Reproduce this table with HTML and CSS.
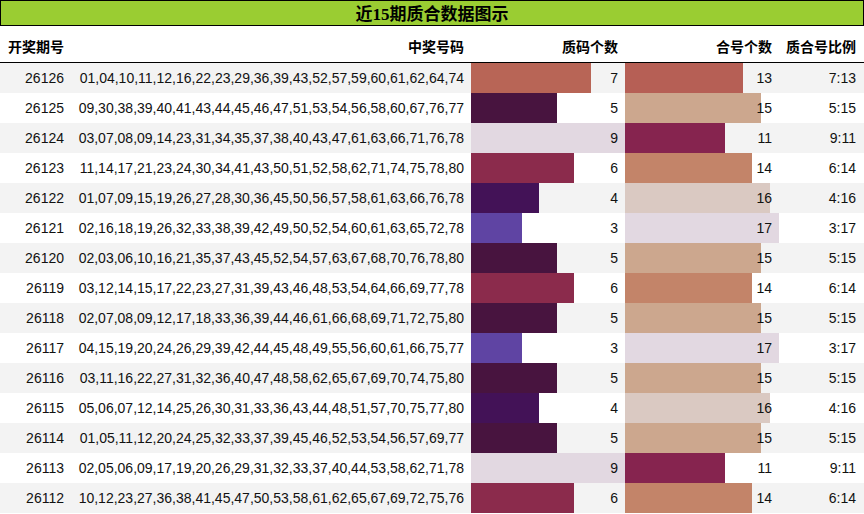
FILE: index.html
```html
<!DOCTYPE html>
<html lang="zh">
<head>
<meta charset="utf-8">
<title>近15期质合数据图示</title>
<link rel="stylesheet" href="styles.css">
</head>
<body>
<div class="title">近15期质合数据图示</div>
<table class="data">
  <colgroup>
    <col class="c-issue"><col class="c-nums"><col class="c-bar"><col class="c-bar"><col class="c-ratio">
  </colgroup>
  <thead>
    <tr><th class="left">开奖期号</th><th>中奖号码</th><th>质码个数</th><th>合号个数</th><th>质合号比例</th></tr>
  </thead>
  <tbody>
    <tr><td>26126</td><td>01,04,10,11,12,16,22,23,29,36,39,43,52,57,59,60,61,62,64,74</td><td class="bar" style="--w:77.78%;--c:#b86556">7</td><td class="bar" style="--w:76.47%;--c:#b65f55">13</td><td>7:13</td></tr>
    <tr><td>26125</td><td>09,30,38,39,40,41,43,44,45,46,47,51,53,54,56,58,60,67,76,77</td><td class="bar" style="--w:55.56%;--c:#48143f">5</td><td class="bar" style="--w:88.24%;--c:#cca78e">15</td><td>5:15</td></tr>
    <tr><td>26124</td><td>03,07,08,09,14,23,31,34,35,37,38,40,43,47,61,63,66,71,76,78</td><td class="bar" style="--w:100%;--c:#e2d8e1">9</td><td class="bar" style="--w:64.71%;--c:#86244f">11</td><td>9:11</td></tr>
    <tr><td>26123</td><td>11,14,17,21,23,24,30,34,41,43,50,51,52,58,62,71,74,75,78,80</td><td class="bar" style="--w:66.67%;--c:#8b2b4c">6</td><td class="bar" style="--w:82.35%;--c:#c38469">14</td><td>6:14</td></tr>
    <tr><td>26122</td><td>01,07,09,15,19,26,27,28,30,36,45,50,56,57,58,61,63,66,76,78</td><td class="bar" style="--w:44.44%;--c:#431257">4</td><td class="bar" style="--w:94.12%;--c:#dac9c2">16</td><td>4:16</td></tr>
    <tr><td>26121</td><td>02,16,18,19,26,32,33,38,39,42,49,50,52,54,60,61,63,65,72,78</td><td class="bar" style="--w:33.33%;--c:#5f44a3">3</td><td class="bar" style="--w:100%;--c:#e2d8e1">17</td><td>3:17</td></tr>
    <tr><td>26120</td><td>02,03,06,10,16,21,35,37,43,45,52,54,57,63,67,68,70,76,78,80</td><td class="bar" style="--w:55.56%;--c:#48143f">5</td><td class="bar" style="--w:88.24%;--c:#cca78e">15</td><td>5:15</td></tr>
    <tr><td>26119</td><td>03,12,14,15,17,22,23,27,31,39,43,46,48,53,54,64,66,69,77,78</td><td class="bar" style="--w:66.67%;--c:#8b2b4c">6</td><td class="bar" style="--w:82.35%;--c:#c38469">14</td><td>6:14</td></tr>
    <tr><td>26118</td><td>02,07,08,09,12,17,18,33,36,39,44,46,61,66,68,69,71,72,75,80</td><td class="bar" style="--w:55.56%;--c:#48143f">5</td><td class="bar" style="--w:88.24%;--c:#cca78e">15</td><td>5:15</td></tr>
    <tr><td>26117</td><td>04,15,19,20,24,26,29,39,42,44,45,48,49,55,56,60,61,66,75,77</td><td class="bar" style="--w:33.33%;--c:#5f44a3">3</td><td class="bar" style="--w:100%;--c:#e2d8e1">17</td><td>3:17</td></tr>
    <tr><td>26116</td><td>03,11,16,22,27,31,32,36,40,47,48,58,62,65,67,69,70,74,75,80</td><td class="bar" style="--w:55.56%;--c:#48143f">5</td><td class="bar" style="--w:88.24%;--c:#cca78e">15</td><td>5:15</td></tr>
    <tr><td>26115</td><td>05,06,07,12,14,25,26,30,31,33,36,43,44,48,51,57,70,75,77,80</td><td class="bar" style="--w:44.44%;--c:#431257">4</td><td class="bar" style="--w:94.12%;--c:#dac9c2">16</td><td>4:16</td></tr>
    <tr><td>26114</td><td>01,05,11,12,20,24,25,32,33,37,39,45,46,52,53,54,56,57,69,77</td><td class="bar" style="--w:55.56%;--c:#48143f">5</td><td class="bar" style="--w:88.24%;--c:#cca78e">15</td><td>5:15</td></tr>
    <tr><td>26113</td><td>02,05,06,09,17,19,20,26,29,31,32,33,37,40,44,53,58,62,71,78</td><td class="bar" style="--w:100%;--c:#e2d8e1">9</td><td class="bar" style="--w:64.71%;--c:#86244f">11</td><td>9:11</td></tr>
    <tr><td>26112</td><td>10,12,23,27,36,38,41,45,47,50,53,58,61,62,65,67,69,72,75,76</td><td class="bar" style="--w:66.67%;--c:#8b2b4c">6</td><td class="bar" style="--w:82.35%;--c:#c38469">14</td><td>6:14</td></tr>
  </tbody>
</table>
</body>
</html>
```
FILE: styles.css
```css
html, body {
  margin: 0;
  padding: 0;
  background: #ffffff;
}

body {
  font-family: "Liberation Sans", "Noto Sans CJK SC", sans-serif;
  color: #111111;
  width: 864px;
}

.title {
  box-sizing: border-box;
  height: 26px;
  border: 1px solid #000000;
  background: #9acd32;
  padding-top: 3px;
  font-family: "Liberation Serif", "Noto Sans CJK SC", serif;
  font-weight: bold;
  font-size: 17px;
  line-height: 21px;
  text-align: center;
  color: #000000;
}

.data {
  width: 864px;
  border-collapse: collapse;
  table-layout: fixed;
  font-size: 14px;
}

.c-issue { width: 71px; }
.c-nums { width: 400px; }
.c-bar { width: 154px; }
.c-ratio { width: 85px; }

.data th {
  font-weight: bold;
  color: #000000;
  text-align: right;
  padding: 11px 7px 5px 0;
  line-height: 20px;
  height: 20px;
  border-bottom: 1px solid #000000;
  white-space: nowrap;
}

.data th.left {
  text-align: left;
  padding-left: 8px;
}

.data th:last-child {
  padding-right: 8px;
}

.data td {
  height: 30px;
  padding: 0 7px 0 0;
  text-align: right;
  vertical-align: middle;
  line-height: 30px;
  white-space: nowrap;
  overflow: visible;
}

.data td:last-child {
  padding-right: 8px;
}

.data tbody tr:nth-child(odd) {
  background: #f3f3f3;
}

.data tbody tr:nth-child(even) {
  background: #ffffff;
}

.data td.bar {
  background-image: linear-gradient(to right, var(--c) 0, var(--c) var(--w), transparent var(--w));
  background-repeat: no-repeat;
}
```
